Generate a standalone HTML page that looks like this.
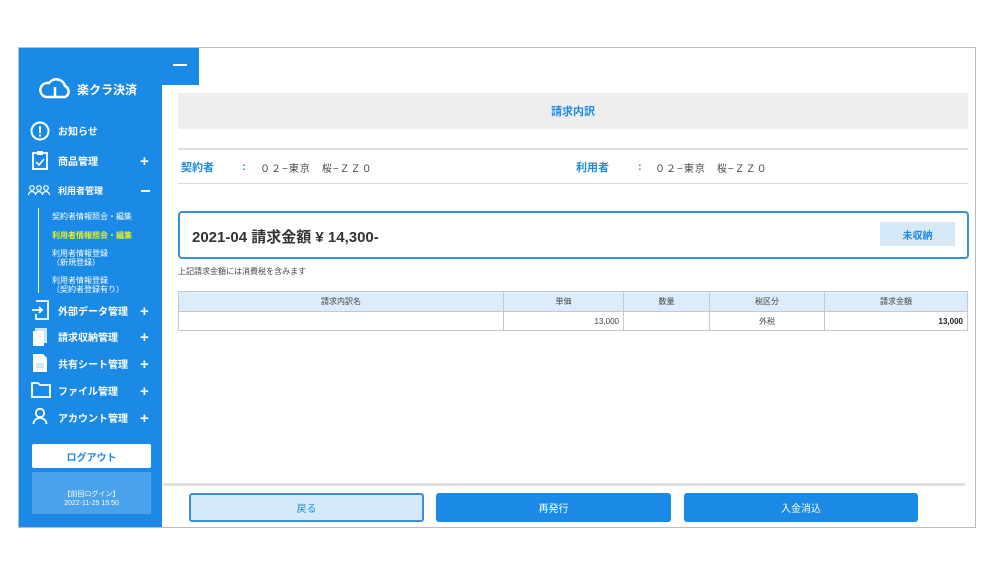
<!DOCTYPE html>
<html><head><meta charset="utf-8"><style>
*{margin:0;padding:0;box-sizing:border-box}
body{width:1000px;height:563px;background:#fff;position:relative;font-family:"Liberation Sans","Noto Sans CJK JP",sans-serif;overflow:hidden}
.a{position:absolute}
.frame{left:18px;top:47px;width:958px;height:481px;border:1px solid #bbb}
.side{left:19px;top:48px;width:143px;height:479px;background:#1a8ae6}
.tab{left:162px;top:48px;width:37px;height:37px;background:#1a8ae6}
.w{color:#fff;font-weight:bold;font-size:10px}
.plus{color:#fff;font-size:15px;left:140px;font-weight:bold}
.sub{color:#fff;font-size:8px;left:52px;line-height:9px}
.cell{position:absolute;border:1px solid #c8c8c8;font-size:8px;color:#444;display:flex;align-items:center;justify-content:center}
.btn{position:absolute;top:493px;height:29px;border-radius:3px;font-size:10px;display:flex;align-items:center;justify-content:center}
</style></head><body>
<div class="a frame"></div>
<div class="a side"></div>
<div class="a tab"></div>
<div class="a" style="left:173px;top:64px;width:14px;height:2px;background:#fff"></div>
<svg class="a" style="left:38px;top:77px" width="34" height="22" viewBox="0 0 34 22"><path d="M8 20 H27 A6 6 0 0 0 27 9 A9 9 0 0 0 11 6 A7 7 0 0 0 8 20 Z" fill="none" stroke="#fff" stroke-width="2.5"/><path d="M17 10 V20" stroke="#fff" stroke-width="2.5"/></svg>
<div class="a w" style="left:77px;top:81px;font-size:12px">楽クラ決済</div>
<svg class="a" style="left:30px;top:121px" width="20" height="20"><circle cx="10" cy="10" r="8.5" fill="none" stroke="#fff" stroke-width="2"/><rect x="9" y="5" width="2" height="7" fill="#fff"/><rect x="9" y="13.5" width="2" height="2" fill="#fff"/></svg>
<div class="a w" style="left:58px;top:123px">お知らせ</div>
<svg class="a" style="left:32px;top:150px" width="16" height="20"><rect x="1" y="3" width="14" height="16" fill="none" stroke="#fff" stroke-width="1.8"/><rect x="5" y="1" width="6" height="4" fill="#fff"/><path d="M4 12 l3 3 l5 -6" fill="none" stroke="#fff" stroke-width="1.5"/></svg>
<div class="a w" style="left:58px;top:153px">商品管理</div><div class="a plus" style="top:153px">+</div>
<svg class="a" style="left:28px;top:184px" width="22" height="12"><g fill="none" stroke="#fff" stroke-width="1.2"><circle cx="4" cy="4" r="2.3"/><path d="M0.5 11 a3.5 3.5 0 0 1 7 0"/><circle cx="11" cy="4" r="2.3"/><path d="M7.5 11 a3.5 3.5 0 0 1 7 0"/><circle cx="18" cy="4" r="2.3"/><path d="M14.5 11 a3.5 3.5 0 0 1 7 0"/></g></svg>
<div class="a w" style="left:58px;top:184px;font-size:9px">利用者管理</div><div class="a" style="left:141px;top:190px;width:9px;height:2px;background:#fff"></div>
<div class="a" style="left:38px;top:208px;width:1px;height:85px;background:#fff"></div>
<div class="a sub" style="top:212px">契約者情報照会・編集</div>
<div class="a sub" style="top:231px;color:#e8f020;font-weight:bold">利用者情報照会・編集</div>
<div class="a sub" style="top:249px">利用者情報登録<br>（新規登録）</div>
<div class="a sub" style="top:276px">利用者情報登録<br>（契約者登録有り）</div>
<svg class="a" style="left:31px;top:300px" width="18" height="20"><path d="M5 1 H17 V19 H5 V14" fill="none" stroke="#fff" stroke-width="1.8"/><path d="M1 10 H11 M8 7 l3 3 l-3 3" fill="none" stroke="#fff" stroke-width="1.8"/></svg>
<div class="a w" style="left:58px;top:303px">外部データ管理</div><div class="a plus" style="top:303px">+</div>
<svg class="a" style="left:32px;top:327px" width="16" height="20"><rect x="3" y="1" width="12" height="15" fill="#cfe6fb"/><rect x="1" y="4" width="11" height="15" fill="#fff"/></svg>
<div class="a w" style="left:58px;top:329px">請求収納管理</div><div class="a plus" style="top:329px">+</div>
<svg class="a" style="left:32px;top:353px" width="16" height="20"><path d="M1 1 H11 L15 5 V19 H1 Z" fill="#fff"/><rect x="4" y="10" width="8" height="5" fill="#cfe6fb"/></svg>
<div class="a w" style="left:58px;top:356px">共有シート管理</div><div class="a plus" style="top:356px">+</div>
<svg class="a" style="left:31px;top:382px" width="20" height="16"><path d="M1 1 H7 L9 3 H19 V15 H1 Z" fill="none" stroke="#fff" stroke-width="1.8"/></svg>
<div class="a w" style="left:58px;top:383px">ファイル管理</div><div class="a plus" style="top:383px">+</div>
<svg class="a" style="left:32px;top:407px" width="16" height="18"><circle cx="8" cy="6" r="4.2" fill="none" stroke="#fff" stroke-width="1.8"/><path d="M1.5 17 a6.5 6 0 0 1 13 0" fill="none" stroke="#fff" stroke-width="1.8"/></svg>
<div class="a w" style="left:58px;top:410px">アカウント管理</div><div class="a plus" style="top:410px">+</div>
<div class="a" style="left:32px;top:444px;width:119px;height:24px;background:#fff;border-radius:2px;color:#1a8ae6;font-size:10px;font-weight:bold;display:flex;align-items:center;justify-content:center">ログアウト</div>
<div class="a" style="left:32px;top:472px;width:119px;height:42px;background:#4aa2ec;color:#fff;font-size:7px;text-align:center;padding-top:18px;line-height:9px">【前回ログイン】<br>2022-11-25 15:50</div>

<div class="a" style="left:178px;top:93px;width:790px;height:36px;background:#eeeeee;color:#1a8ae6;font-size:11px;font-weight:bold;display:flex;align-items:center;justify-content:center">請求内訳</div>
<div class="a" style="left:178px;top:148px;width:790px;height:2px;background:#ddd"></div>
<div class="a" style="left:181px;top:159px;color:#1a8ae6;font-size:11px;font-weight:bold">契約者</div>
<div class="a" style="left:242px;top:160px;color:#1a8ae6;font-size:11px;font-weight:bold;line-height:14px">:</div>
<div class="a" style="left:260px;top:160px;color:#444;font-size:10px;letter-spacing:1px">０２−東京　桜−ＺＺ０</div>
<div class="a" style="left:576px;top:159px;color:#1a8ae6;font-size:11px;font-weight:bold">利用者</div>
<div class="a" style="left:638px;top:160px;color:#1a8ae6;font-size:11px;font-weight:bold;line-height:14px">:</div>
<div class="a" style="left:655px;top:160px;color:#444;font-size:10px;letter-spacing:1px">０２−東京　桜−ＺＺ０</div>
<div class="a" style="left:178px;top:183px;width:790px;height:1px;background:#ddd"></div>
<div class="a" style="left:178px;top:211px;width:791px;height:48px;border:2px solid #3a8fd6;border-radius:4px"></div>
<div class="a" style="left:192px;top:226px;color:#333;font-size:15px;font-weight:bold">2021-04 請求金額 ¥ 14,300-</div>
<div class="a" style="left:880px;top:222px;width:75px;height:24px;background:#d6e9f9;color:#1a8ae6;font-size:10px;font-weight:bold;display:flex;align-items:center;justify-content:center">未収納</div>
<div class="a" style="left:178px;top:266px;color:#444;font-size:8px">上記請求金額には消費税を含みます</div>
<div class="cell" style="left:178px;top:291px;width:326px;height:21px;background:#dcecfa">請求内訳名</div>
<div class="cell" style="left:503px;top:291px;width:121px;height:21px;background:#dcecfa">単価</div>
<div class="cell" style="left:623px;top:291px;width:87px;height:21px;background:#dcecfa">数量</div>
<div class="cell" style="left:709px;top:291px;width:116px;height:21px;background:#dcecfa">税区分</div>
<div class="cell" style="left:824px;top:291px;width:144px;height:21px;background:#dcecfa">請求金額</div>
<div class="cell" style="left:178px;top:311px;width:326px;height:20px"></div>
<div class="cell" style="left:503px;top:311px;width:121px;height:20px;justify-content:flex-end;padding-right:4px">13,000</div>
<div class="cell" style="left:623px;top:311px;width:87px;height:20px"></div>
<div class="cell" style="left:709px;top:311px;width:116px;height:20px">外税</div>
<div class="cell" style="left:824px;top:311px;width:144px;height:20px;justify-content:flex-end;padding-right:4px;font-weight:bold;color:#222">13,000</div>
<div class="a" style="left:163px;top:483px;width:802px;height:3px;background:#e0e0e0"></div>
<div class="btn" style="left:189px;width:235px;background:#d6e9f9;border:2px solid #3a8fd6;color:#1a8ae6">戻る</div>
<div class="btn" style="left:436px;width:235px;background:#1a8ae6;color:#fff">再発行</div>
<div class="btn" style="left:684px;width:234px;background:#1a8ae6;color:#fff">入金消込</div>
</body></html>
